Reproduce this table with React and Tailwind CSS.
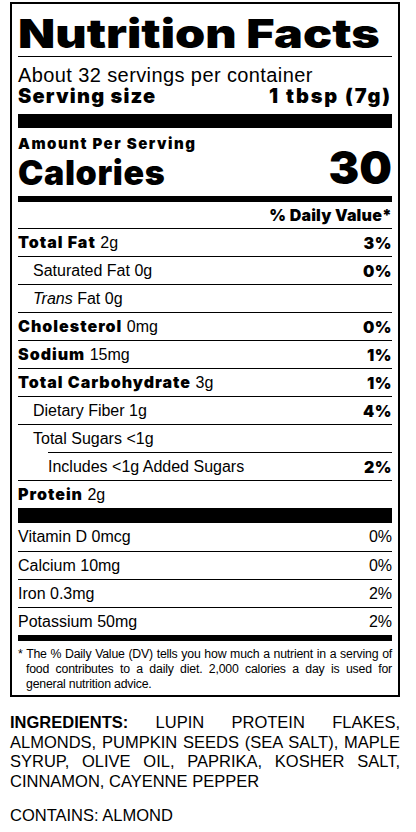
import React from "react";

const heavy = "font-['Inter','Liberation_Sans',sans-serif] font-black";

function Row({ label, amount, dv, indent = 0, bold = true, italic, lineIndent = 0 }) {
  const pl = indent === 1 ? "pl-[15px]" : "";
  return (
    <div className={lineIndent ? "pl-[30px]" : ""}>
      <div className="h-[28px] border-t border-black flex items-center justify-between">
        <div className={`${lineIndent ? "" : pl} text-[16px] leading-none whitespace-nowrap`}>
          {bold ? <span className={`${heavy} tracking-[1px]`}>{label}</span> : italic ? <span><i>{italic}</i>{label}</span> : <span>{label}</span>}
          {amount ? <span> {amount}</span> : null}
        </div>
        {dv ? <div className={`${heavy} text-[16px] leading-none tracking-[0.5px]`}>{dv}</div> : null}
      </div>
    </div>
  );
}

function VRow({ label, dv, first }) {
  return (
    <div className={`h-[28px] flex items-center justify-between text-[16px] leading-none ${first ? "" : "border-t border-black"}`}>
      <span>{label}</span>
      <span>{dv}</span>
    </div>
  );
}

export default function App() {
  return (
    <div className="w-[416px] h-[832px] bg-white text-black font-['Liberation_Sans',Arial,sans-serif] overflow-hidden">
      <div className="ml-[10px] w-[390px] pt-[2px]">
        <div className="border-2 border-black px-[6px]">
          <div className="h-[53px] border-b border-black flex items-end pb-[2px]">
            <div className={`${heavy} text-[40px] leading-none origin-left scale-x-[1.21] whitespace-nowrap`}>Nutrition Facts</div>
          </div>
          <div className="pt-[9px] text-[20px] leading-[18px] tracking-[0.4px]">About 32 servings per container</div>
          <div className="flex justify-between text-[20px] leading-[20px] pt-[2px]">
            <span className={`${heavy} tracking-[1.2px]`}>Serving size</span>
            <span className={`${heavy} tracking-[1.9px]`}>1 tbsp (7g)</span>
          </div>
          <div className="mt-[8px] h-[14px] bg-black"></div>
          <div className={`${heavy} text-[15px] leading-none pt-[8px] tracking-[1.5px]`}>Amount Per Serving</div>
          <div className="flex justify-between items-end h-[39px]">
            <span className={`${heavy} text-[34px] leading-none tracking-[0.6px]`}>Calories</span>
            <span className={`${heavy} text-[46px] leading-none`}>30</span>
          </div>
          <div className="mt-[6px] h-[6px] bg-black"></div>
          <div className={`${heavy} h-[26px] flex items-center justify-end text-[16px] leading-none tracking-[0.2px]`}>% Daily Value*</div>
          <Row label="Total Fat" amount="2g" dv="3%" />
          <Row label="Saturated Fat 0g" bold={false} indent={1} dv="0%" />
          <Row label=" Fat 0g" italic="Trans" bold={false} indent={1} />
          <Row label="Cholesterol" amount="0mg" dv="0%" />
          <Row label="Sodium" amount="15mg" dv="1%" />
          <Row label="Total Carbohydrate" amount="3g" dv="1%" />
          <Row label="Dietary Fiber 1g" bold={false} indent={1} dv="4%" />
          <Row label="Total Sugars <1g" bold={false} indent={1} />
          <Row label="Includes <1g Added Sugars" bold={false} lineIndent dv="2%" />
          <Row label="Protein" amount="2g" />
          <div className="h-[15px] bg-black"></div>
          <VRow label="Vitamin D 0mcg" dv="0%" first />
          <VRow label="Calcium 10mg" dv="0%" />
          <VRow label="Iron 0.3mg" dv="2%" />
          <VRow label="Potassium 50mg" dv="2%" />
          <div className="h-[6px] bg-black"></div>
          <p className="pt-[6px] pb-[3px] pl-2 -indent-2 text-[12.3px] leading-[15px] tracking-[-0.2px] text-justify">
            * The % Daily Value (DV) tells you how much a nutrient in a serving of food contributes to a daily diet. 2,000 calories a day is used for general nutrition advice.
          </p>
        </div>
        <p className="mt-[16px] text-[16.5px] leading-[19.5px] text-justify">
          <span className="font-bold">INGREDIENTS:</span> LUPIN PROTEIN FLAKES, ALMONDS, PUMPKIN SEEDS (SEA SALT), MAPLE SYRUP, OLIVE OIL, PAPRIKA, KOSHER SALT, CINNAMON, CAYENNE PEPPER
        </p>
        <p className="mt-[15px] text-[16.5px] leading-[19.5px]">CONTAINS: ALMOND</p>
      </div>
    </div>
  );
}
